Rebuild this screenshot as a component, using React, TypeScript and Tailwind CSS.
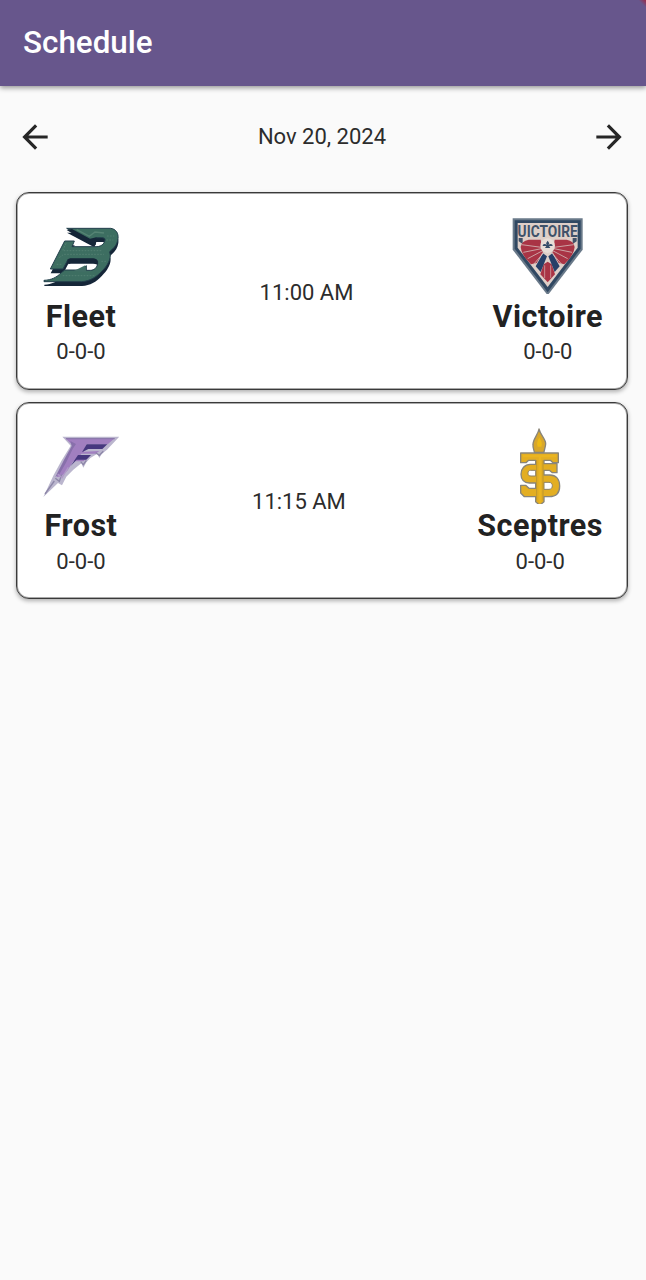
import type { ReactNode } from 'react';

function FleetLogo() {
  const mark =
    'M92 31H224C240 33 248 46 246 62C244 76 238 87 225 97C221 101 219 103 222 107C226 122 214 144 197 160C179 179 162 189 137 191H24V187C47 186 62 178 76 164L86 156H138L151 143V157H163C175 157 184 148 185 136C186 127 181 124 170 124H96L81 153H43L86 69H115L108 86H183C198 85 207 75 207 64C207 61 203 59 196 59H180L174 75Z';
  return (
    <svg viewBox="21 0 228 228" className="size-[76px]">
      <path d={mark} transform="translate(1 13)" fill="#152638" />
      <path d={mark} fill="#3d6e61" stroke="#233f4c" strokeWidth="3" />
      <path d="M92 36L108 33L162 62L181 58L179 81L170 83Z" fill="#152638" />
      <path d="M122 35L160 55L177 42L204 45" fill="none" stroke="#568474" strokeWidth="4" />
      <path d="M94 126L102 121H172C184 122 188 130 184 139C180 134 172 133 154 133H109L98 139Z" fill="#152638" />
      <path d="M90 76L80 98H198M70 119L83 109H204M62 139H78M80 173H178M213 54H235M211 66H232M196 130H210" fill="none" stroke="#527f71" strokeWidth="3" strokeDasharray="5 4" />
      <path d="M112 160L148 142L150 162Z" fill="#416e65" />
    </svg>
  );
}

function VictoireLogo() {
  return (
    <svg viewBox="28 18 228 228" className="size-[76px]">
      <path d="M36 19H246V113L141 250L36 113Z" fill="#697989" />
      <path d="M42 25H240V110L141 241L42 110Z" fill="#304862" />
      <path d="M51 33H231V107L141 225L51 107Z" fill="#decfc8" />
      <path d="M54 78H66V96L54 88ZM228 78H216V96L228 88Z" fill="#405269" />
      <path d="M60 105Q62 87 84 83H120L126 121L108 153L91 157Q62 130 60 105Z" fill="#a93445" />
      <path d="M222 105Q220 87 198 83H162L156 121L174 153L191 157Q220 130 222 105Z" fill="#a93445" />
      <path d="M129 157L141 149L153 157L163 187L141 211L119 187Z" fill="#a93445" />
      <path d="M105 163L127 124L139 133L120 180Z" fill="#263f68" />
      <path d="M177 163L155 124L143 133L162 180Z" fill="#263f68" />
      <path d="M63 98L122 106M68 121L122 110M81 140L126 116M98 158L130 121M219 98L160 106M214 121L160 110M201 140L156 116M184 158L152 121" stroke="#d4b9b7" strokeWidth="2.5" />
      <path d="M132 160V198M150 160V198" stroke="#d4b9b7" strokeWidth="2" />
      <circle cx="141" cy="101" r="22" fill="#e8ddd6" />
      <path d="M141 86L146 94L143 98C150 94 156 95 156 102H145L149 108H133L137 102H126C126 95 132 94 139 98L136 94Z" fill="#354c68" />
      <text transform="translate(141 76) scale(0.84 1)" textAnchor="middle" fontFamily="Roboto, sans-serif" fontSize="49" fontWeight="700" fill="#405269">UICTOIRE</text>
    </svg>
  );
}

function FrostLogo() {
  return (
    <svg viewBox="21 4 228 228" className="size-[76px]">
      <path d="M79 30H250L213 69L197 82L190 94L184 81L163 94L151 107L142 123L136 110L112 129L91 150L78 176L66 169L22 211L53 145L76 103L104 57Z" fill="#bbb6ce" />
      <path d="M88 35H236L215 53H151L143 75L190 73L179 81H137L124 95L158 91L142 104H112L94 132L76 149L61 152L89 101L112 58Z" fill="#a17fc0" />
      <path d="M103 43L120 52L110 67L90 108L70 143L58 151L84 100L107 58Z" fill="#8870ab" />
      <path d="M152 53H214L199 67H157L138 77ZM126 85H165L151 99H122L104 118Z" fill="#46377e" />
      <path d="M90 36H236" stroke="#8b78ab" strokeWidth="4" />
      <path d="M179 78L190 86L202 74M134 105L142 114L151 101M58 155L70 164L77 144M27 202L55 163" fill="none" stroke="#8d87a8" strokeWidth="4" />
      <path d="M65 142L78 153L97 122" fill="none" stroke="#b09ac8" strokeWidth="4" />
    </svg>
  );
}

function SceptresLogo() {
  return (
    <svg viewBox="-10 10 228 228" className="size-[76px]">
      <g stroke="#898579" strokeWidth="4" strokeLinejoin="round">
        <path d="M101 13C105 31 122 43 121 58C120 70 116 77 116 83H87C87 77 82 71 83 60C83 43 98 31 101 13Z" fill="#d8a72b" />
        <path d="M46 85H159V114H143L135 107H116V117H155V144H141L132 137H116V151H133C152 151 163 164 163 184C163 205 151 216 132 216H116V231L103 242L91 231V216H57L46 205V182H61L71 191H91V175H72C56 175 47 164 47 149C47 132 58 119 75 119H91V107H70L62 114H46Z" fill="#e3ae22" />
      </g>
      <path d="M91 137H76C70 137 68 141 68 146C68 152 71 154 77 154H91ZM116 173H131C137 173 141 177 141 183C141 190 137 194 131 194H116Z" fill="#fff" stroke="#8c8065" strokeWidth="3" />
      <path d="M102 38C96 49 93 57 97 66H108C113 55 106 48 102 38Z" fill="#edba16" />
      <path d="M94 107V227M113 107V227" stroke="#b4902f" strokeWidth="2.5" />
      <path d="M104 92V233M52 94H153" stroke="#eab520" strokeWidth="7" />
    </svg>
  );
}

function Team({ name, logo }: { name: string; logo: ReactNode }) {
  return (
    <div className="flex flex-col items-center">
      {logo}
      <div className="mt-[4.8px] h-9 text-[30.5px] font-bold leading-9 tracking-[0.5px]">{name}</div>
      <div className="pt-[0.7px] text-[22px] leading-[34px] text-[#2c2c2c]">0-0-0</div>
    </div>
  );
}

function Game({ time, children }: { time: string; children: [ReactNode, ReactNode] }) {
  return (
    <article className="flex h-[197.8px] items-start justify-between rounded-[13px] border border-[#3a3a3a] bg-white pl-[26px] pr-6 pt-[25px] shadow-[0_2px_4px_rgba(0,0,0,0.3),inset_0_0_0_1px_rgba(40,40,40,0.4)]">
      {children[0]}
      <div className="mt-[57.6px] pl-[1.5px] text-[22px] leading-[34px] text-[#2c2c2c]">{time}</div>
      {children[1]}
    </article>
  );
}

function Arrow({ right = false }: { right?: boolean }) {
  return (
    <svg viewBox="0 0 24 24" className="size-[38px]" fill="#262626">
      <path d={right ? 'M12 4l-1.41 1.41L16.17 11H4v2h12.17l-5.58 5.59L12 20l8-8z' : 'M20 11H7.83l5.59-5.59L12 4l-8 8 8 8 1.41-1.41L7.83 13H20v-2z'} />
    </svg>
  );
}

export default function App() {
  return (
    <div className="min-h-screen bg-[#fafafa] font-['Roboto',sans-serif] text-[#222]">
      <header className="relative flex h-[86px] items-center bg-[#67568c] pl-[23px] text-white shadow-[0_2px_5px_rgba(0,0,0,0.4)]">
        <h1 className="text-[31.4px] font-medium leading-9">Schedule</h1>
        <span className="absolute right-0 top-0 size-2 bg-linear-to-bl from-[#9b2848] to-transparent to-50%" />
      </header>
      <nav className="flex h-[106px] items-start justify-between pl-4 pr-[18px] pt-8">
        <button aria-label="Previous day"><Arrow /></button>
        <div className="pt-[2px] text-[22px] leading-[34px] text-[#2c2c2c]">Nov 20, 2024</div>
        <button aria-label="Next day"><Arrow right /></button>
      </nav>
      <main className="flex flex-col gap-[11.8px] pl-4 pr-[18px]">
        <Game time="11:00 AM">
          <Team name="Fleet" logo={<FleetLogo />} />
          <Team name="Victoire" logo={<VictoireLogo />} />
        </Game>
        <Game time="11:15 AM">
          <Team name="Frost" logo={<FrostLogo />} />
          <Team name="Sceptres" logo={<SceptresLogo />} />
        </Game>
      </main>
    </div>
  );
}
